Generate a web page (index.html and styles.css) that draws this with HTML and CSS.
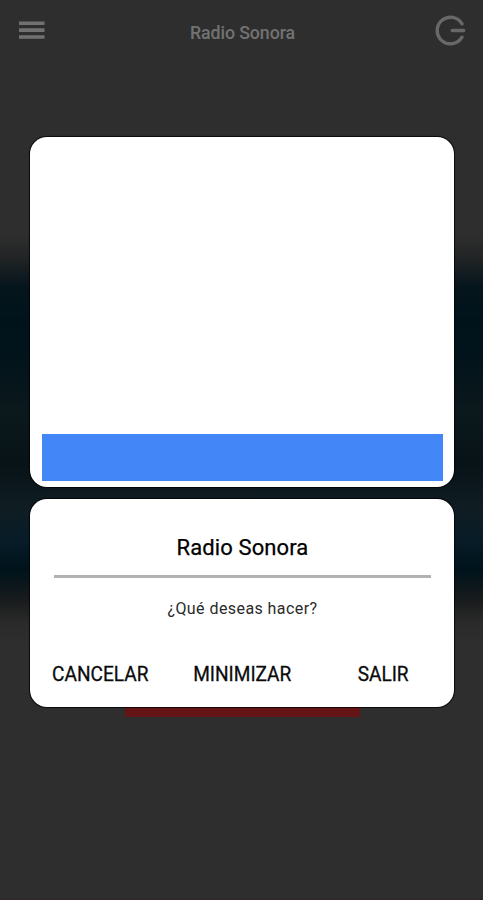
FILE: index.html
```html
<!DOCTYPE html>
<html lang="es">
<head>
<meta charset="utf-8">
<meta name="viewport" content="width=device-width, initial-scale=1">
<title>Radio Sonora</title>
<link rel="stylesheet" href="styles.css">
</head>
<body>
<div class="screen">
  <header class="topbar">
    <svg class="menu-icon" width="26" height="20" viewBox="0 0 26 20"><path d="M0 3.2h25.5M0 10.1h25.5M0 17h25.5" fill="none" stroke="#717171" stroke-width="3.6"/></svg>
    <h1 class="topbar-title"><span>Radio Sonora</span></h1>
    <svg class="power-icon" width="32" height="32" viewBox="0 0 32 32"><path d="M27 8.8A13.3 13.3 0 1 0 27 22.2M17.2 15.5h11.5" fill="none" stroke="#686868" stroke-width="3.4" stroke-linecap="round"/></svg>
  </header>
  <main class="overlay">
    <section class="card ad"><div class="ad-bar"></div></section>
    <section class="card dialog">
      <h2 class="dialog-title"><span>Radio Sonora</span></h2>
      <p class="question"><span>¿Qué deseas hacer?</span></p>
      <div class="actions">
        <button><span class="cancel">CANCELAR</span></button>
        <button><span class="minimize">MINIMIZAR</span></button>
        <button><span class="exit">SALIR</span></button>
      </div>
    </section>
    <div class="accent"></div>
  </main>
</div>
</body>
</html>
```
FILE: styles.css
```css
* { box-sizing: border-box; }
body { margin: 0; font-family: Roboto, sans-serif; }
h1, h2, p { margin: 0; font-weight: 400; }
span { display: inline-block; white-space: nowrap; }
.screen {
  height: 900px;
  overflow: hidden;
  border-bottom: 2px solid #30272a;
  background:
    linear-gradient(180deg, #2e2e2e 0, #2e2e2e 235px, #222425 257px, #06151c 286px, #00131b 320px, #03141b 365px, #0b181c 410px, #071317 465px, #101d23 510px, #071c28 540px, #00131b 570px, #181b1c 600px, #2a2a2a 622px, #2e2e2e 645px);
}
.topbar {
  height: 66px;
  padding: 0 16px 0 18px;
  display: grid;
  grid-template-columns: 32px 1fr 32px;
}
.menu-icon { margin-top: 20px; margin-left: 1px; }
.power-icon { margin-top: 14.5px; }
.topbar-title {
  padding-top: 22px;
  color: #727272;
  font-size: 17.8px;
  line-height: 22px;
  font-weight: 500;
  letter-spacing: -.1px;
  text-align: center;
}
.overlay { padding: 71px 29px 0 30px; }
.card {
  background: #fff;
  border-radius: 17px;
  box-shadow: 0 0 0 1px #0009, 0 0 2px #000;
}
.ad {
  height: 350px;
  padding: 0 11.5px 6.5px 12px;
  display: flex;
  align-items: flex-end;
}
.ad-bar { width: 100%; height: 46.5px; background: #4286f7; }
.dialog {
  position: relative;
  z-index: 1;
  height: 208px;
  margin-top: 12px;
  padding: 34px 23px 0 24px;
}
.dialog-title {
  height: 45px;
  border-bottom: 3px solid #b2b2b2;
  color: #000;
  font-size: 22px;
  line-height: 29px;
  letter-spacing: .1px;
  text-align: center;
  -webkit-text-stroke: .25px #000;
}
.question {
  margin-top: 20px;
  color: #2a2a2a;
  font-size: 16px;
  line-height: 22px;
  letter-spacing: .43px;
  text-align: center;
}
.actions { display: grid; grid-template-columns: repeat(3, 1fr); margin: 40px -23px 0 -24px; }
.actions button {
  padding: 0;
  border: 0;
  background: none;
  color: #0b0b0b;
  font: 400 20.3px/28px Roboto, sans-serif;
  -webkit-text-stroke: .3px #0b0b0b;
}
.actions span { transform: scaleX(.94); }
.accent { width: 235px; height: 11px; margin: -1px 0 0 95px; background: #641414; }
```
